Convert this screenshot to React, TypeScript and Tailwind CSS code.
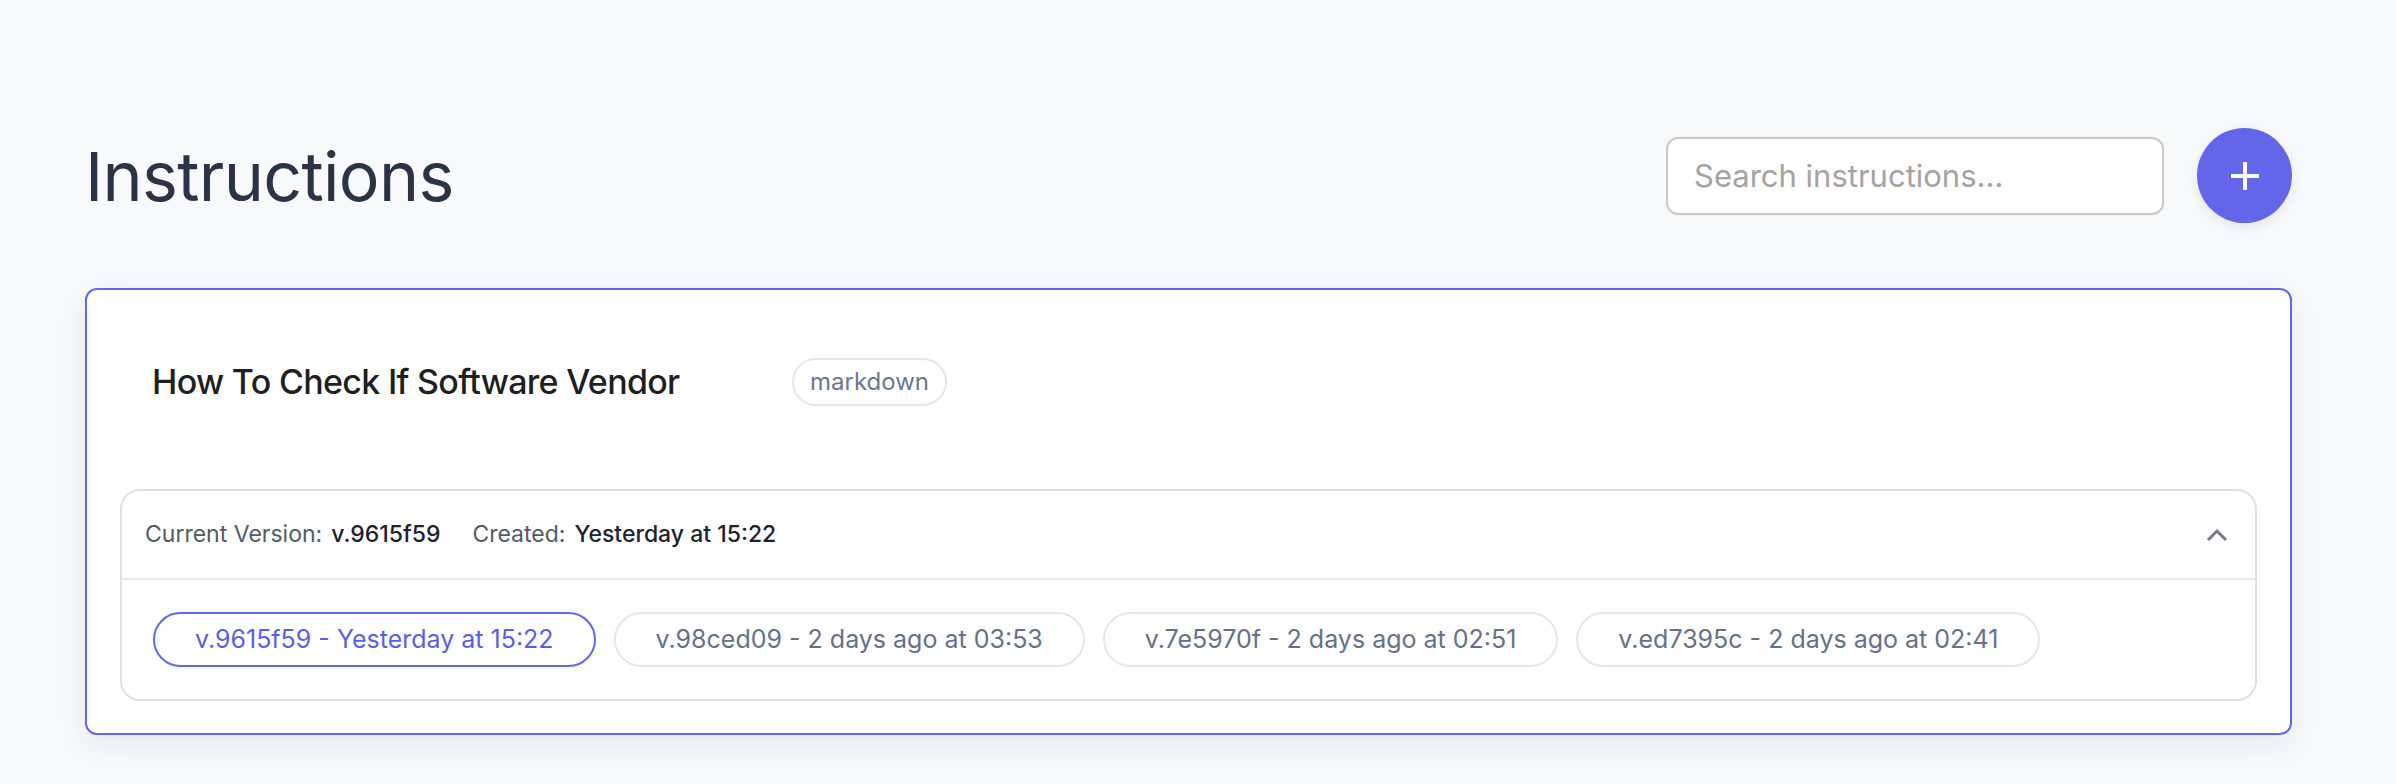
import React from "react";

const versions = [
  { id: "v.9615f59", when: "Yesterday at 15:22", active: true },
  { id: "v.98ced09", when: "2 days ago at 03:53", active: false },
  { id: "v.7e5970f", when: "2 days ago at 02:51", active: false },
  { id: "v.ed7395c", when: "2 days ago at 02:41", active: false },
];

export default function App() {
  return (
    <div className="min-h-screen w-full bg-[#f8f9fb] font-['Inter',sans-serif]">
      <div className="pl-[85px] pr-[104px] pt-[128px] pb-[40px]">
        {/* Header */}
        <div className="flex h-[95px] items-center justify-between">
          <h1 className="text-[68px] font-normal leading-none tracking-[-0.01em] text-[#2b3446]">
            Instructions
          </h1>
          <div className="flex items-center gap-[33px]">
            <input
              type="text"
              placeholder="Search instructions..."
              className="h-[78px] w-[498px] rounded-[12px] border-2 border-[#c9c9cb] bg-white px-[26px] text-[31px] text-[#333] outline-none placeholder:text-[#a3a3a3]"
            />
            <button className="flex h-[95px] w-[95px] items-center justify-center rounded-full bg-[#6366e9] shadow-[0_4px_12px_rgba(0,0,0,0.08)]">
              <svg width="30" height="30" viewBox="0 0 30 30">
                <path d="M15 1v28M1 15h28" stroke="white" strokeWidth="4" strokeLinecap="butt" />
              </svg>
            </button>
          </div>
        </div>

        {/* Card */}
        <div className="mt-[65px] rounded-[12px] border-2 border-[#6366f1] bg-white px-[33px] pb-[32px] shadow-[0_10px_30px_rgba(17,24,39,0.07)]">
          <div className="mt-[68px] mb-[83px] flex h-[48px] items-center pl-[32px]">
            <div className="w-[640px] text-[34px] font-medium leading-none tracking-[-0.02em] text-[#1f1f21]">
              How To Check If Software Vendor
            </div>
            <span className="flex h-[48px] items-center rounded-full border-2 border-[#e6e7ea] px-[16px] text-[24px] leading-none text-[#6b7890]">
              markdown
            </span>
          </div>

          <div className="rounded-[20px] border-2 border-[#e1e1e3] bg-white">
            <div className="flex h-[89px] items-center justify-between border-b-2 border-[#e8e8ea] pl-[23px] pr-[26px]">
              <div className="flex items-center text-[23px] leading-none">
                <span className="text-[#555a63]">Current Version:</span>
                <span className="ml-[9px] font-medium text-[#1e2130]">v.9615f59</span>
                <span className="ml-[32px] text-[#555a63]">Created:</span>
                <span className="ml-[9px] font-medium text-[#1e2130]">Yesterday at 15:22</span>
              </div>
              <svg width="24" height="16" viewBox="0 0 24 16" className="text-[#767b87]">
                <path d="M3 13L12 4l9 9" fill="none" stroke="currentColor" strokeWidth="3" />
              </svg>
            </div>
            <div className="flex items-center gap-[18px] px-[31px] py-[32px]">
              {versions.map((v) => (
                <button
                  key={v.id}
                  className={
                    v.active
                      ? "flex h-[55px] items-center rounded-full border-2 border-[#6366f1] px-[40px] text-[25px] leading-none text-[#5b5fe6]"
                      : "flex h-[55px] items-center rounded-full border-2 border-[#e6e7ea] px-[40px] text-[25px] leading-none text-[#667189]"
                  }
                >
                  {v.id} - {v.when}
                </button>
              ))}
            </div>
          </div>
        </div>
      </div>
    </div>
  );
}
